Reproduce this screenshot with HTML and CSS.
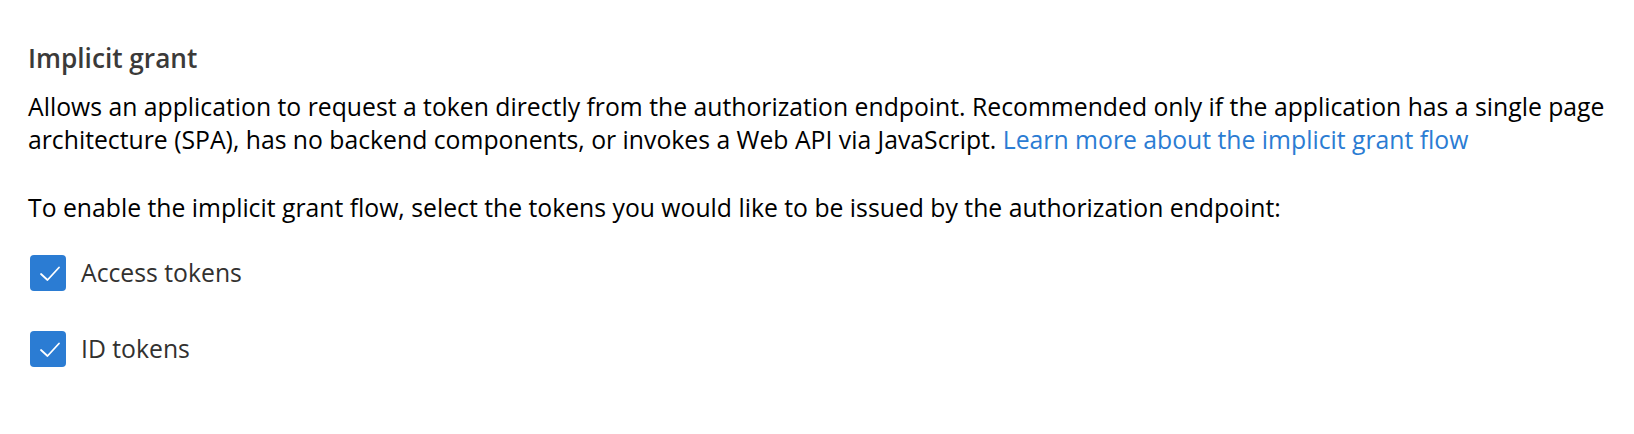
FILE: index.html
```html
<!DOCTYPE html>
<html lang="en">
<head>
<meta charset="utf-8">
<title>Implicit grant</title>
<link rel="stylesheet" href="styles.css">
</head>
<body>
<section class="panel">
  <h2 class="title">Implicit grant</h2>
  <p class="desc">Allows an application to request a token directly from the authorization endpoint. Recommended only if the application has a single page architecture (SPA), has no backend components, or invokes a Web API via JavaScript. <a class="link" href="#">Learn more about the implicit grant flow</a></p>
  <p class="prompt">To enable the implicit grant flow, select the tokens you would like to be issued by the authorization endpoint:</p>
  <ul class="options">
    <li class="option">
      <span class="box"><svg viewBox="0 0 36 36" width="36" height="36"><path d="M11 19 L17.5 25 L29 12.5" fill="none" stroke="#fff" stroke-width="1.8" stroke-linecap="round" stroke-linejoin="round"/></svg></span>
      <span class="label">Access tokens</span>
    </li>
    <li class="option">
      <span class="box"><svg viewBox="0 0 36 36" width="36" height="36"><path d="M11 19 L17.5 25 L29 12.5" fill="none" stroke="#fff" stroke-width="1.8" stroke-linecap="round" stroke-linejoin="round"/></svg></span>
      <span class="label">ID tokens</span>
    </li>
  </ul>
</section>
</body>
</html>
```
FILE: styles.css
```css
html, body {
  margin: 0;
  padding: 0;
  background: #fff;
}
.panel {
  font-family: "Open Sans", "Noto Sans", sans-serif;
  font-size: 24.75px;
  color: #000;
  padding: 41px 6px 0 28px;
}
.title {
  margin: 0;
  font-size: 26.2px;
  line-height: 34px;
  font-weight: 600;
  color: #3b3a39;
}
.desc {
  margin: 15px 0 0;
  line-height: 33px;
}
.link {
  color: #2b7cd3;
  text-decoration: none;
}
.prompt {
  margin: 35px 0 0;
  line-height: 34px;
}
.options {
  list-style: none;
  margin: 0;
  padding: 0;
}
.option {
  display: flex;
  align-items: center;
  gap: 15px;
  margin-top: 30px;
  margin-left: 2px;
  color: #323130;
}
.option + .option {
  margin-top: 40px;
}
.box {
  width: 36px;
  height: 36px;
  border-radius: 4px;
  background: #2b7cd3;
  display: flex;
}
.label {
  line-height: 36px;
}
```
